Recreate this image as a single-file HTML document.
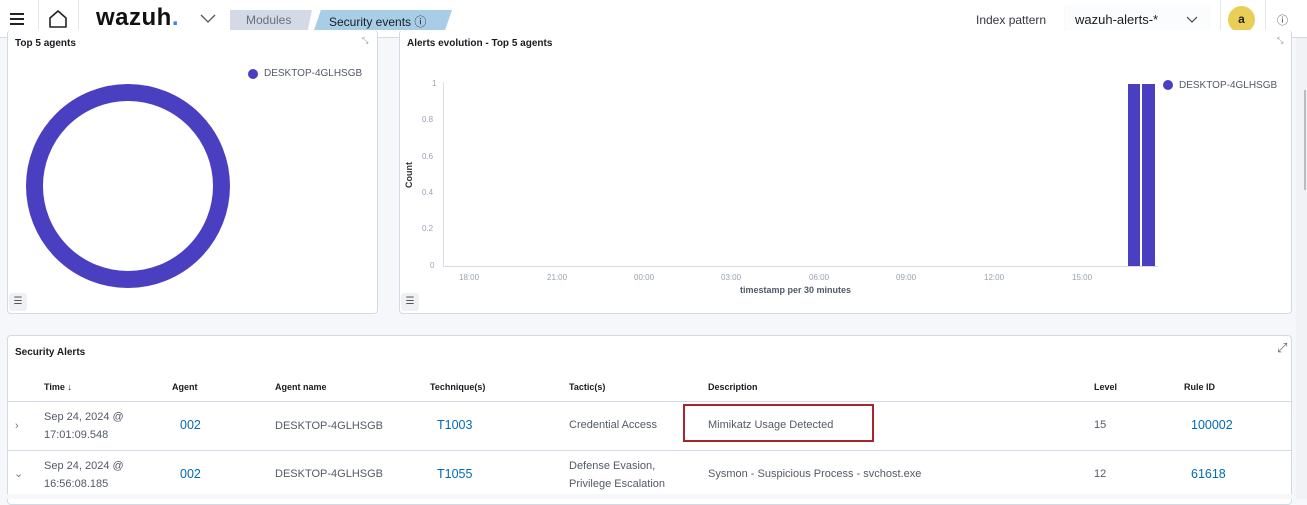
<!DOCTYPE html>
<html><head><style>
*{box-sizing:border-box;margin:0;padding:0}
body{width:1307px;height:499px;overflow:hidden;background:#f5f7fa;font-family:"Liberation Sans",sans-serif;color:#343741;position:relative}
.abs{position:absolute}
.hdr{left:0;top:0;width:1307px;height:38px;background:#fff;border-bottom:1px solid #d3dae6}
.panel{background:#fff;border:1px solid #d3dae6;border-radius:4px}
.t{font-size:10px;font-weight:bold;color:#1a1c21}
.lbl{font-size:8px;color:#98a2b3}
.th{font-size:9px;font-weight:bold;color:#1a1c21}
.td{font-size:11px;color:#535966;line-height:18px}
.lnk{font-size:12.5px;color:#006bb8}
.row{left:8px;width:1284px;border-top:1px solid #d3dae6}
</style></head><body>
<div class="abs hdr"></div>
<div class="abs" style="left:10px;top:13px;width:14px;height:2px;background:#222;box-shadow:0 5px 0 #222,0 10px 0 #222"></div>
<div class="abs" style="left:38px;top:0;width:1px;height:38px;background:#e3e6eb"></div>
<svg class="abs" style="left:47px;top:8px" width="22" height="22" viewBox="0 0 22 22"><path d="M3 10 L11 3 L19 10 V19 H3 Z" fill="none" stroke="#222" stroke-width="1.6" stroke-linejoin="round"/></svg>
<div class="abs" style="left:78px;top:0;width:1px;height:38px;background:#e3e6eb"></div>
<div class="abs" style="left:96px;top:4px;font-size:24px;font-weight:bold;color:#111;letter-spacing:0.5px">wazuh<span style="color:#3d82f0">.</span></div>
<svg class="abs" style="left:200px;top:14px" width="16" height="10"><path d="M1 1 L8 8 L15 1" fill="none" stroke="#555" stroke-width="1.3"/></svg>
<div class="abs" style="left:230px;top:10px;width:82px;height:20px;background:#d3dae6;clip-path:polygon(0 0,100% 0,95% 100%,0 100%)"></div>
<div class="abs" style="left:246px;top:13px;font-size:12px;color:#69707d">Modules</div>
<div class="abs" style="left:314px;top:10px;width:138px;height:20px;background:#a8cde6;clip-path:polygon(5% 0,100% 0,95% 100%,0 100%)"></div>
<div class="abs" style="left:329px;top:13px;font-size:12px;color:#1a1c21">Security events ⓘ</div>
<div class="abs" style="left:976px;top:13px;font-size:12px;color:#343741">Index pattern</div>
<div class="abs" style="left:1065px;top:5px;width:144px;height:33px;background:#fbfcfd;border-bottom:1px solid #e3e6eb;box-shadow:0 1px 2px rgba(0,0,0,0.08)"></div>
<div class="abs" style="left:1075px;top:12px;font-size:13px;color:#1a1c21">wazuh-alerts-*</div>
<svg class="abs" style="left:1186px;top:16px" width="12" height="8"><path d="M1 1 L6 6 L11 1" fill="none" stroke="#444" stroke-width="1.2"/></svg>
<div class="abs" style="left:1220px;top:0;width:1px;height:38px;background:#e3e6eb"></div>
<div class="abs" style="left:1228px;top:6px;width:27px;height:27px;border-radius:50%;background:#e9cf58;font-size:12px;font-weight:bold;text-align:center;line-height:27px;color:#222">a</div>
<div class="abs" style="left:1265px;top:0;width:1px;height:38px;background:#e3e6eb"></div>
<div class="abs" style="left:1277px;top:12px;font-size:11px;color:#444">ⓘ</div>
<div class="abs" style="left:1296px;top:38px;width:11px;height:461px;background:#f0f2f5"></div>
<div class="abs" style="left:1304px;top:90px;width:2px;height:100px;background:#bbb"></div>

<!-- panel 1 -->
<div class="abs panel" style="left:7px;top:30px;width:371px;height:284px;border-top:none"></div>
<div class="abs t" style="left:15px;top:38px">Top 5 agents</div>
<div class="abs" style="left:362px;top:36px;font-size:8px;color:#888">⤡</div>
<div class="abs" style="left:248px;top:69px;width:10px;height:10px;border-radius:50%;background:#4a3fc0"></div>
<div class="abs" style="left:264px;top:68px;font-size:10px;color:#535966">DESKTOP-4GLHSGB</div>
<div class="abs" style="left:26px;top:84px;width:204px;height:204px;border-radius:50%;border:17px solid #4a3fc0"></div>
<div class="abs" style="left:9px;top:293px;width:18px;height:18px;background:#eef0f3;border-radius:3px;font-size:10px;text-align:center;line-height:18px;color:#555">☰</div>

<!-- panel 2 -->
<div class="abs panel" style="left:399px;top:30px;width:893px;height:284px;border-top:none"></div>
<div class="abs t" style="left:407px;top:38px">Alerts evolution - Top 5 agents</div>
<div class="abs" style="left:1277px;top:36px;font-size:8px;color:#888">⤡</div>
<div class="abs" style="left:404px;top:188px;font-size:9px;font-weight:bold;color:#333;transform:rotate(-90deg);transform-origin:left top">Count</div>
<div class="abs" style="left:443px;top:82px;width:1px;height:185px;background:#dde"></div>
<div class="abs" style="left:443px;top:266px;width:715px;height:1px;background:#d3dae6"></div>
<div class="abs lbl" style="left:432px;top:79px">1</div>
<div class="abs lbl" style="left:422px;top:115px">0.8</div>
<div class="abs lbl" style="left:422px;top:152px">0.6</div>
<div class="abs lbl" style="left:422px;top:188px">0.4</div>
<div class="abs lbl" style="left:422px;top:224px">0.2</div>
<div class="abs lbl" style="left:430px;top:261px">0</div>
<div class="abs lbl" style="left:459px;top:273px">18:00</div>
<div class="abs lbl" style="left:547px;top:273px">21:00</div>
<div class="abs lbl" style="left:634px;top:273px">00:00</div>
<div class="abs lbl" style="left:721px;top:273px">03:00</div>
<div class="abs lbl" style="left:809px;top:273px">06:00</div>
<div class="abs lbl" style="left:896px;top:273px">09:00</div>
<div class="abs lbl" style="left:984px;top:273px">12:00</div>
<div class="abs lbl" style="left:1072px;top:273px">15:00</div>
<div class="abs" style="left:740px;top:285px;font-size:9px;font-weight:bold;color:#535966">timestamp per 30 minutes</div>
<div class="abs" style="left:1128px;top:84px;width:12px;height:182px;background:#4a3fc0"></div>
<div class="abs" style="left:1142px;top:84px;width:13px;height:182px;background:#4a3fc0"></div>
<div class="abs" style="left:1163px;top:80px;width:10px;height:10px;border-radius:50%;background:#4a3fc0"></div>
<div class="abs" style="left:1179px;top:80px;font-size:10px;color:#535966">DESKTOP-4GLHSGB</div>
<div class="abs" style="left:401px;top:293px;width:18px;height:18px;background:#eef0f3;border-radius:3px;font-size:10px;text-align:center;line-height:18px;color:#555">☰</div>

<!-- table -->
<div class="abs panel" style="left:7px;top:335px;width:1285px;height:170px"></div>
<div class="abs t" style="left:15px;top:347px">Security Alerts</div>
<div class="abs" style="left:1277px;top:340px;font-size:13px;color:#666">⤢</div>
<div class="abs th" style="left:44px;top:382px">Time ↓</div>
<div class="abs th" style="left:172px;top:382px">Agent</div>
<div class="abs th" style="left:275px;top:382px">Agent name</div>
<div class="abs th" style="left:430px;top:382px">Technique(s)</div>
<div class="abs th" style="left:569px;top:382px">Tactic(s)</div>
<div class="abs th" style="left:708px;top:382px">Description</div>
<div class="abs th" style="left:1094px;top:382px">Level</div>
<div class="abs th" style="left:1184px;top:382px">Rule ID</div>
<div class="abs row" style="top:401px"></div>
<div class="abs row" style="top:450px"></div>

<div class="abs td" style="left:15px;top:417px;color:#777">›</div>
<div class="abs td" style="left:44px;top:408px">Sep 24, 2024 @<br>17:01:09.548</div>
<div class="abs lnk" style="left:180px;top:418px">002</div>
<div class="abs td" style="left:275px;top:417px">DESKTOP-4GLHSGB</div>
<div class="abs lnk" style="left:437px;top:418px">T1003</div>
<div class="abs td" style="left:569px;top:416px">Credential Access</div>
<div class="abs" style="left:683px;top:404px;width:191px;height:38px;border:2px solid #a5262c"></div>
<div class="abs td" style="left:708px;top:416px">Mimikatz Usage Detected</div>
<div class="abs td" style="left:1094px;top:416px">15</div>
<div class="abs lnk" style="left:1191px;top:418px">100002</div>

<div class="abs td" style="left:14px;top:465px;color:#777">⌄</div>
<div class="abs td" style="left:44px;top:457px">Sep 24, 2024 @<br>16:56:08.185</div>
<div class="abs lnk" style="left:180px;top:467px">002</div>
<div class="abs td" style="left:275px;top:465px">DESKTOP-4GLHSGB</div>
<div class="abs lnk" style="left:437px;top:467px">T1055</div>
<div class="abs td" style="left:569px;top:457px">Defense Evasion,<br>Privilege Escalation</div>
<div class="abs td" style="left:708px;top:465px">Sysmon - Suspicious Process - svchost.exe</div>
<div class="abs td" style="left:1094px;top:465px">12</div>
<div class="abs lnk" style="left:1191px;top:467px">61618</div>
<div class="abs" style="left:0;top:494px;width:1296px;height:5px;background:#f5f7fa"></div>
</body></html>
